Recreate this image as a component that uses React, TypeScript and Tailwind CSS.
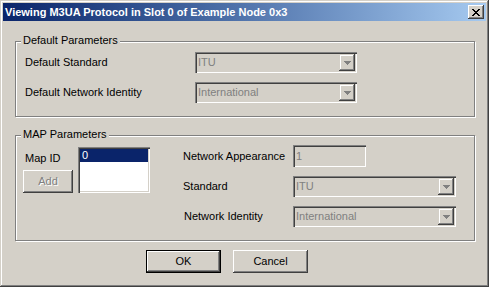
import React from "react";

const sunken =
  "shadow-[inset_1px_1px_0_#808080,inset_2px_2px_0_#404040,inset_-1px_-1px_0_#ffffff,inset_-2px_-2px_0_#D4D0C8]";
const raised =
  "shadow-[inset_-1px_-1px_0_#404040,inset_1px_1px_0_#ffffff,inset_-2px_-2px_0_#808080,inset_2px_2px_0_#D4D0C8]";
const dropRaised =
  "shadow-[inset_-1px_-1px_0_#404040,inset_1px_1px_0_#D4D0C8,inset_-2px_-2px_0_#808080,inset_2px_2px_0_#ffffff]";

function Arrow() {
  return (
    <svg width="7" height="4" viewBox="0 0 7 4" shapeRendering="crispEdges">
      <path d="M0 0h7v1H0zM1 1h5v1H1zM2 2h3v1H2zM3 3h1v1H3z" fill="#808080" />
    </svg>
  );
}

function Combo({ value, w }: { value: string; w: string }) {
  return (
    <div className={`${w} h-[21px] bg-[#D4D0C8] ${sunken} flex items-center pl-[3px] pr-[2px]`}>
      <span className="text-[#808080] flex-1 leading-none">{value}</span>
      <div className={`w-[16px] h-[17px] bg-[#D4D0C8] ${dropRaised} flex items-center justify-center`}>
        <Arrow />
      </div>
    </div>
  );
}

function Group({ title, h, className, children }: { title: string; h: string; className?: string; children: React.ReactNode }) {
  return (
    <div
      className={`relative ml-[15px] w-[460px] ${h} border border-[#808080] shadow-[1px_1px_0_#ffffff,inset_1px_1px_0_#ffffff] ${className ?? ""}`}
    >
      <span className="absolute top-[-8px] left-[5px] px-[2px] bg-[#D4D0C8] leading-[13px]">{title}</span>
      {children}
    </div>
  );
}

export default function App() {
  return (
    <div
      className="w-[489px] h-[287px] bg-[#D4D0C8] flex flex-col text-[11px] text-black shadow-[inset_-1px_-1px_0_#404040,inset_1px_1px_0_#D4D0C8,inset_-2px_-2px_0_#808080,inset_2px_2px_0_#ffffff]"
      style={{ fontFamily: '"Liberation Sans", Arial, sans-serif' }}
    >
      {/* Title bar */}
      <div className="mx-[3px] mt-[3px] h-[18px] flex items-center bg-linear-to-r from-[#0A246A] to-[#A6CAF0]">
        <span className="pl-[2px] font-bold text-white leading-none">
          Viewing M3UA Protocol in Slot 0 of Example Node 0x3
        </span>
        <div className={`ml-auto mr-[2px] w-[16px] h-[14px] bg-[#D4D0C8] ${raised} flex items-center justify-center`}>
          <svg width="8" height="7" viewBox="0 0 8 7" shapeRendering="crispEdges">
            <path
              d="M0 0h2v1H0zM6 0h2v1H6zM1 1h2v1H1zM5 1h2v1H5zM2 2h4v1H2zM3 3h2v1H3zM2 4h4v1H2zM1 5h2v1H1zM5 5h2v1H5zM0 6h2v1H0zM6 6h2v1H6z"
              fill="#000"
            />
          </svg>
        </div>
      </div>

      {/* Default Parameters */}
      <Group title="Default Parameters" h="h-[76px]" className="mt-[20px]">
        <div className="pt-[10px] pl-[9px] flex flex-col gap-[9px]">
          <div className="flex items-center">
            <span className="w-[170px]">Default Standard</span>
            <Combo value="ITU" w="w-[162px]" />
          </div>
          <div className="flex items-center">
            <span className="w-[170px]">Default Network Identity</span>
            <Combo value="International" w="w-[162px]" />
          </div>
        </div>
      </Group>

      {/* MAP Parameters */}
      <Group title="MAP Parameters" h="h-[106px]" className="mt-[18px]">
        <div className="flex items-start pl-[7px] pt-[9px]">
          <div className="flex items-start pt-[2px]">
            <div className="w-[50px] h-[46px] flex flex-col">
              <span className="pl-[2px] pt-[3px]">Map ID</span>
              <div
                className={`mt-auto w-[50px] h-[23px] bg-[#D4D0C8] ${raised} flex items-center justify-center text-[#808080] [text-shadow:1px_1px_0_#ffffff]`}
              >
                Add
              </div>
            </div>
            <div className={`ml-[5px] w-[72px] h-[46px] bg-white ${sunken} p-[2px]`}>
              <div className="h-[13px] bg-[#0A246A] text-white pl-[2px] leading-[13px]">0</div>
            </div>
          </div>
          <div className="ml-[33px] flex flex-col">
            <div className="flex items-center h-[22px]">
              <span className="w-[110px]">Network Appearance</span>
              <div className={`w-[73px] h-[22px] bg-[#D4D0C8] ${sunken} flex items-center pl-[3px] text-[#808080]`}>1</div>
            </div>
            <div className="flex items-center mt-[9px]">
              <span className="w-[110px]">Standard</span>
              <Combo value="ITU" w="w-[163px]" />
            </div>
            <div className="flex items-center mt-[9px]">
              <span className="w-[110px] pl-[1px]">Network Identity</span>
              <Combo value="International" w="w-[163px]" />
            </div>
          </div>
        </div>
      </Group>

      {/* Buttons */}
      <div className="flex mt-[9px] pl-[146px] gap-[12px]">
        <div className="w-[75px] h-[23px] border border-black">
          <div className={`w-full h-full bg-[#D4D0C8] ${raised} flex items-center justify-center`}>OK</div>
        </div>
        <div className={`w-[75px] h-[23px] bg-[#D4D0C8] ${raised} flex items-center justify-center`}>Cancel</div>
      </div>
    </div>
  );
}
